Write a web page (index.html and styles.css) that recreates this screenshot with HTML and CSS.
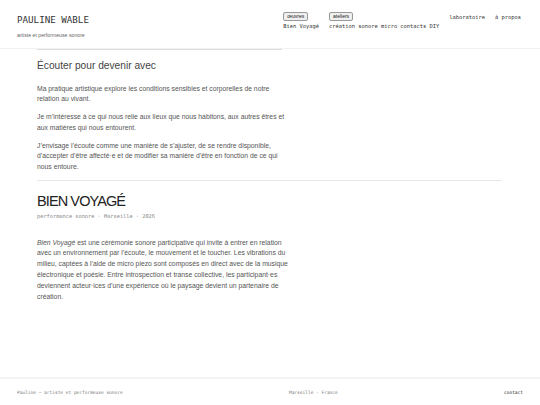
FILE: index.html
```html
<!DOCTYPE html>
<html lang="fr">
<head>
<meta charset="utf-8">
<title>Pauline Wable</title>
<link rel="stylesheet" href="styles.css">
</head>
<body>
<header class="site-header">
  <div class="brand">
    <div class="brand-name">PAULINE WABLE</div>
    <div class="brand-sub">artiste et performeuse sonore</div>
  </div>
  <nav class="nav">
    <div class="nav-group">
      <span class="nav-btn">œuvres</span>
      <span class="nav-sub">Bien Voyagé</span>
    </div>
    <div class="nav-group">
      <span class="nav-btn">ateliers</span>
      <span class="nav-sub">création sonore micro contacts DIY</span>
    </div>
    <a class="nav-link">laboratoire</a>
    <a class="nav-link">à propos</a>
  </nav>
</header>
<main class="main">
  <section class="intro">
    <h2 class="intro-title">Écouter pour devenir avec</h2>
    <p>Ma pratique artistique explore les conditions sensibles et corporelles de notre relation au vivant.</p>
    <p>Je m’intéresse à ce qui nous relie aux lieux que nous habitons, aux autres êtres et aux matières qui nous entourent.</p>
    <p>J’envisage l’écoute comme une manière de s’ajuster, de se rendre disponible, d’accepter d’être affecté·e et de modifier sa manière d’être en fonction de ce qui nous entoure.</p>
  </section>
  <section class="work">
    <h1 class="work-title">BIEN VOYAGÉ</h1>
    <div class="work-meta">performance sonore · Marseille · 2026</div>
    <p class="work-text"><em>Bien Voyagé</em> est une cérémonie sonore participative qui invite à entrer en relation avec un environnement par l’écoute, le mouvement et le toucher. Les vibrations du milieu, captées à l’aide de micro piezo sont composés en direct avec de la musique électronique et poésie. Entre introspection et transe collective, les participant·es deviennent acteur·ices d’une expérience où le paysage devient un partenaire de création.</p>
  </section>
</main>
<footer class="site-footer">
  <span class="foot-left">Pauline — artiste et performeuse sonore</span>
  <span class="foot-mid">Marseille · France</span>
  <a class="foot-right">contact</a>
</footer>
</body>
</html>
```
FILE: styles.css
```css
html, body {
  margin: 0;
  padding: 0;
  background: #fff;
}
body {
  min-height: 405px;
  display: flex;
  flex-direction: column;
  font-family: "Liberation Sans", Arial, sans-serif;
  color: #555;
}
.site-header {
  height: 49px;
  box-sizing: border-box;
  padding: 12px 18px 0 17px;
  display: flex;
  justify-content: space-between;
  align-items: flex-start;
  border-bottom: 1px solid #f1f1f1;
}
.brand-name {
  font-family: "DejaVu Sans Mono", monospace;
  font-size: 9.2px;
  line-height: 12px;
  color: #333;
  margin-top: 2px;
}
.brand-sub {
  font-size: 5.2px;
  line-height: 8px;
  color: #666;
  margin-top: 5px;
}
.nav {
  display: flex;
  gap: 10px;
  align-items: flex-start;
  margin-right: 1px;
}
.nav-group {
  display: flex;
  flex-direction: column;
  align-items: flex-start;
}
.nav-btn {
  font-size: 5px;
  line-height: 7px;
  color: #222;
  background: #efefef;
  border: 1px solid #999;
  border-radius: 2px;
  padding: 0 3px;
}
.nav-sub {
  font-family: "DejaVu Sans Mono", monospace;
  font-size: 5.4px;
  line-height: 8px;
  color: #333;
  margin-top: 1px;
}
.nav-link {
  font-family: "DejaVu Sans Mono", monospace;
  font-size: 5.4px;
  line-height: 8px;
  color: #333;
  margin-top: 1px;
}
.main {
  padding: 0 38px 0 37px;
}
.intro {
  position: relative;
  width: 256px;
  padding-top: 9px;
}
.intro::before {
  content: "";
  position: absolute;
  left: 0;
  top: 0;
  width: 245px;
  border-top: 1px solid #ddd;
}
.intro-title {
  font-weight: normal;
  font-size: 10.2px;
  line-height: 14px;
  color: #444;
  margin: 1px 0 11px;
}
.intro p {
  font-size: 6.8px;
  line-height: 10.4px;
  color: #555;
  margin: 0 0 7.6px;
}
.work {
  border-top: 1px solid #e6e6e6;
  padding-top: 11px;
}
.work-title {
  font-weight: normal;
  font-size: 14.5px;
  line-height: 18px;
  letter-spacing: -0.9px;
  color: #222;
  margin: 0;
}
.work-meta {
  font-family: "DejaVu Sans Mono", monospace;
  font-size: 5.3px;
  line-height: 8px;
  color: #888;
  margin-top: 2px;
}
.work-text {
  width: 254px;
  font-size: 6.8px;
  line-height: 10.8px;
  color: #555;
  margin: 18px 0 0;
}
.site-footer {
  margin-top: auto;
  height: 26px;
  border-top: 2px solid #f3f3f3;
  display: flex;
  justify-content: space-between;
  align-items: center;
  padding: 0 17px;
  font-family: "DejaVu Sans Mono", monospace;
  font-size: 4.5px;
  color: #777;
}
.foot-right {
  color: #222;
}
```
